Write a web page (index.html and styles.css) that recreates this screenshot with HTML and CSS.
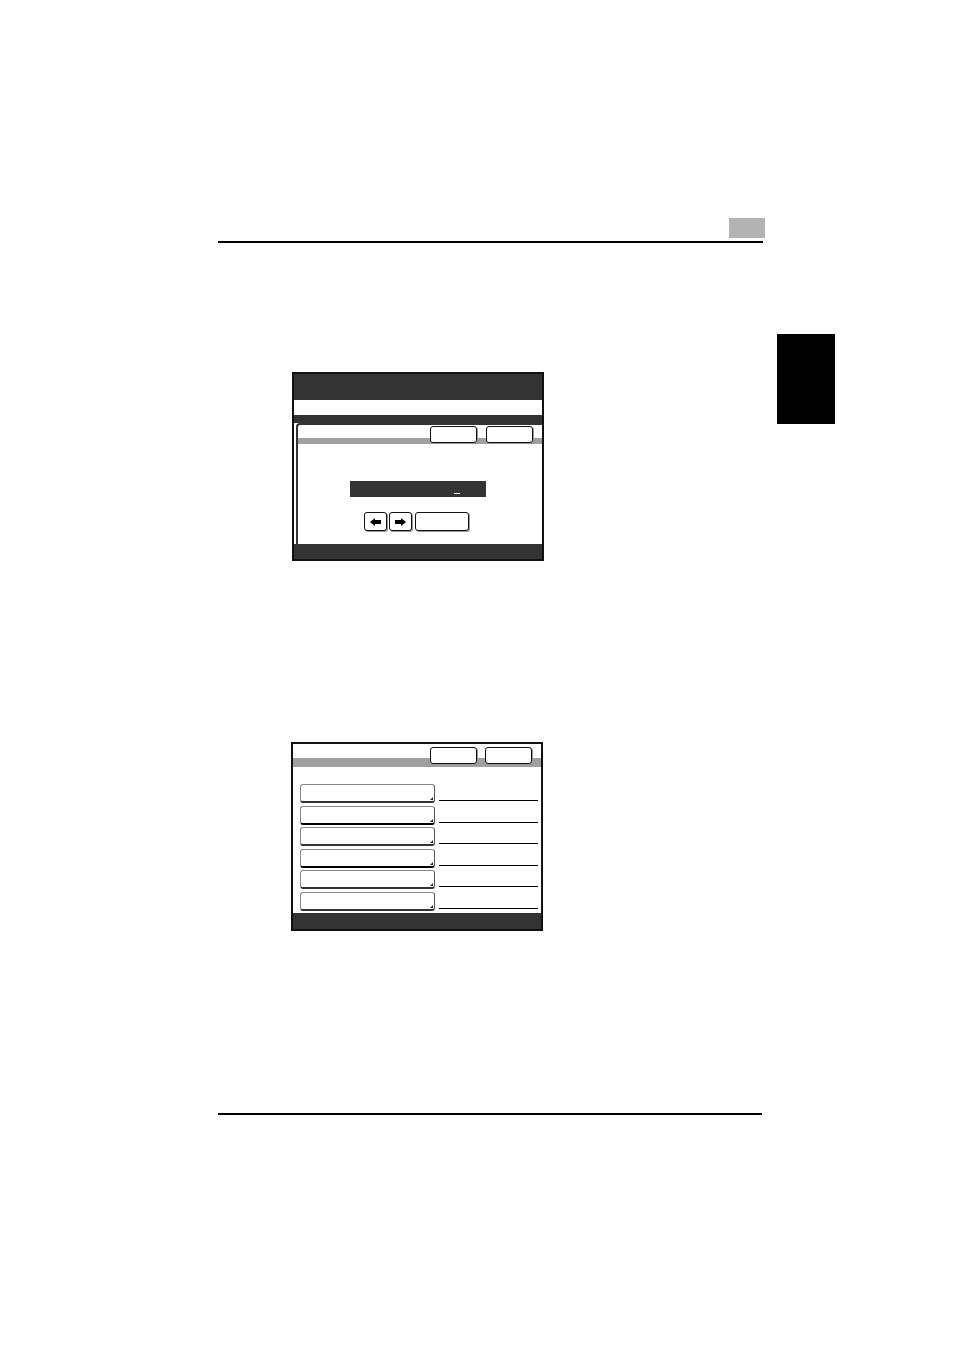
FILE: index.html
```html
<!DOCTYPE html>
<html lang="en">
<head>
<meta charset="utf-8">
<title>Manual page</title>
<link rel="stylesheet" href="styles.css">
</head>
<body>
<div class="page">
  <div class="running-head">
    <div class="chapter-box"></div>
  </div>

  <div class="body-row">
    <div class="figures">
      <div class="screen screen-one">
        <div class="title-bar"></div>
        <div class="message-strip"></div>
        <div class="dark-band"></div>
        <div class="panel-wrap">
          <div class="panel">
            <div class="toolbar toolbar-one">
              <div class="key key-top"></div>
              <div class="key key-top"></div>
            </div>
            <div class="input-bar"><span class="cursor"></span></div>
            <div class="nav-row">
              <div class="key key-arrow">
                <svg width="11" height="8" viewBox="0 0 11 8"><path d="M0 4 L5 0 V2 H11 V6 H5 V8 Z" fill="#000"/></svg>
              </div>
              <div class="key key-arrow">
                <svg width="11" height="8" viewBox="0 0 11 8"><path d="M11 4 L6 0 V2 H0 V6 H6 V8 Z" fill="#000"/></svg>
              </div>
              <div class="key key-wide"></div>
            </div>
          </div>
        </div>
        <div class="bottom-band"></div>
      </div>

      <div class="screen screen-two">
        <div class="toolbar toolbar-two">
          <div class="key key-top"></div>
          <div class="key key-top"></div>
        </div>
        <div class="list">
          <div class="list-row"><div class="item"><span class="corner"></span></div><div class="value-line"></div></div>
          <div class="list-row"><div class="item item-strong"><span class="corner"></span></div><div class="value-line"></div></div>
          <div class="list-row"><div class="item"><span class="corner"></span></div><div class="value-line"></div></div>
          <div class="list-row"><div class="item item-strong"><span class="corner"></span></div><div class="value-line"></div></div>
          <div class="list-row"><div class="item"><span class="corner"></span></div><div class="value-line"></div></div>
          <div class="list-row"><div class="item"><span class="corner"></span></div><div class="value-line"></div></div>
        </div>
        <div class="bottom-band bottom-band-two"></div>
      </div>
    </div>

    <div class="thumb-tab"></div>
  </div>

  <div class="running-foot"></div>
</div>
</body>
</html>
```

FILE: styles.css
```css
* { box-sizing: border-box; }

html, body {
  margin: 0;
  padding: 0;
  background: #fff;
  font-family: "Liberation Sans", Arial, sans-serif;
}

.page {
  width: 954px;
  height: 1350px;
  padding-top: 218px;
  overflow: hidden;
}

/* running head */
.running-head {
  margin-left: 218px;
  width: 545px;
  height: 25px;
  border-bottom: 2px solid #000;
  display: flex;
  justify-content: flex-end;
  align-items: flex-start;
}

.chapter-box {
  width: 36px;
  height: 20px;
  background: #b3b3b3;
  margin-right: -2px;
}

/* main row */
.body-row {
  display: flex;
  align-items: flex-start;
  margin-top: 91px;
  padding-left: 292px;
}

.figures {
  width: 252px;
  display: flex;
  flex-direction: column;
}

.thumb-tab {
  width: 58px;
  height: 90px;
  background: #000;
  margin-left: 233px;
}

/* screens */
.screen {
  width: 252px;
  border: 2px solid #111;
  background: #fff;
  display: flex;
  flex-direction: column;
}

.screen-one {
  margin-top: 38px;
  height: 189px;
}

.screen-two {
  margin-top: 181px;
  margin-left: -1px;
  height: 189px;
}

.title-bar {
  height: 26px;
  background: #333;
}

.message-strip {
  height: 15px;
  background: #fff;
}

.dark-band {
  height: 8px;
  background: #333;
}

.panel-wrap {
  height: 121px;
  background: #fff;
  padding-left: 2px;
}

.panel {
  height: 100%;
  border-left: 2px solid #333;
  border-top: 2px solid #333;
  border-top-left-radius: 4px;
}

.bottom-band {
  height: 15px;
  background: #333;
}

.bottom-band-two {
  height: 16px;
}

/* toolbar with the grey rule behind the keys */
.toolbar {
  display: flex;
  justify-content: flex-end;
  align-items: flex-start;
  gap: 9px;
  padding-right: 9px;
}

.toolbar-one {
  height: 20px;
  padding-top: 1px;
  background: linear-gradient(to bottom, transparent 13px, #a0a0a0 13px, #a0a0a0 19px, transparent 19px);
}

.toolbar-two {
  height: 23px;
  padding-top: 3px;
  gap: 8px;
  background: linear-gradient(to bottom, transparent 14px, #a0a0a0 14px, #a0a0a0 23px);
}

/* keys */
.key {
  background: #fff;
  border: 1px solid #111;
  border-radius: 3px;
  box-shadow: 1px 1px 0 #999;
}

.key-top {
  width: 47px;
  height: 17px;
}

.input-bar {
  margin-top: 36px;
  margin-left: 52px;
  width: 136px;
  height: 16px;
  background: #333;
  position: relative;
}

.cursor {
  position: absolute;
  left: 104px;
  top: 12px;
  width: 6px;
  height: 1px;
  background: #fff;
}

.nav-row {
  margin-top: 15px;
  margin-left: 66px;
  display: flex;
  gap: 2px;
  height: 19px;
}

.key-arrow {
  width: 23px;
  height: 19px;
  display: flex;
  align-items: center;
  justify-content: center;
}

.key-wide {
  width: 54px;
  height: 19px;
  margin-left: 1px;
}

/* list screen */
.list {
  margin-top: 17px;
  display: flex;
  flex-direction: column;
}

.list-row {
  height: 21.5px;
  display: flex;
  align-items: flex-start;
}

.item {
  position: relative;
  margin-left: 7px;
  width: 135px;
  height: 19px;
  border: 1px solid #888;
  border-bottom: 2px solid #333;
  border-right: 1px solid #555;
  border-radius: 3px;
  background: #fff;
}

.item-strong {
  border-bottom-color: #000;
}

.corner {
  position: absolute;
  right: 1px;
  bottom: 1px;
  width: 0;
  height: 0;
  border-left: 3px solid transparent;
  border-bottom: 3px solid #222;
}

.value-line {
  margin-left: 4px;
  margin-top: 16px;
  width: 99px;
  border-top: 1px solid #000;
}

/* running foot */
.running-foot {
  margin-top: 182px;
  margin-left: 218px;
  width: 544px;
  border-top: 2px solid #000;
}
```
